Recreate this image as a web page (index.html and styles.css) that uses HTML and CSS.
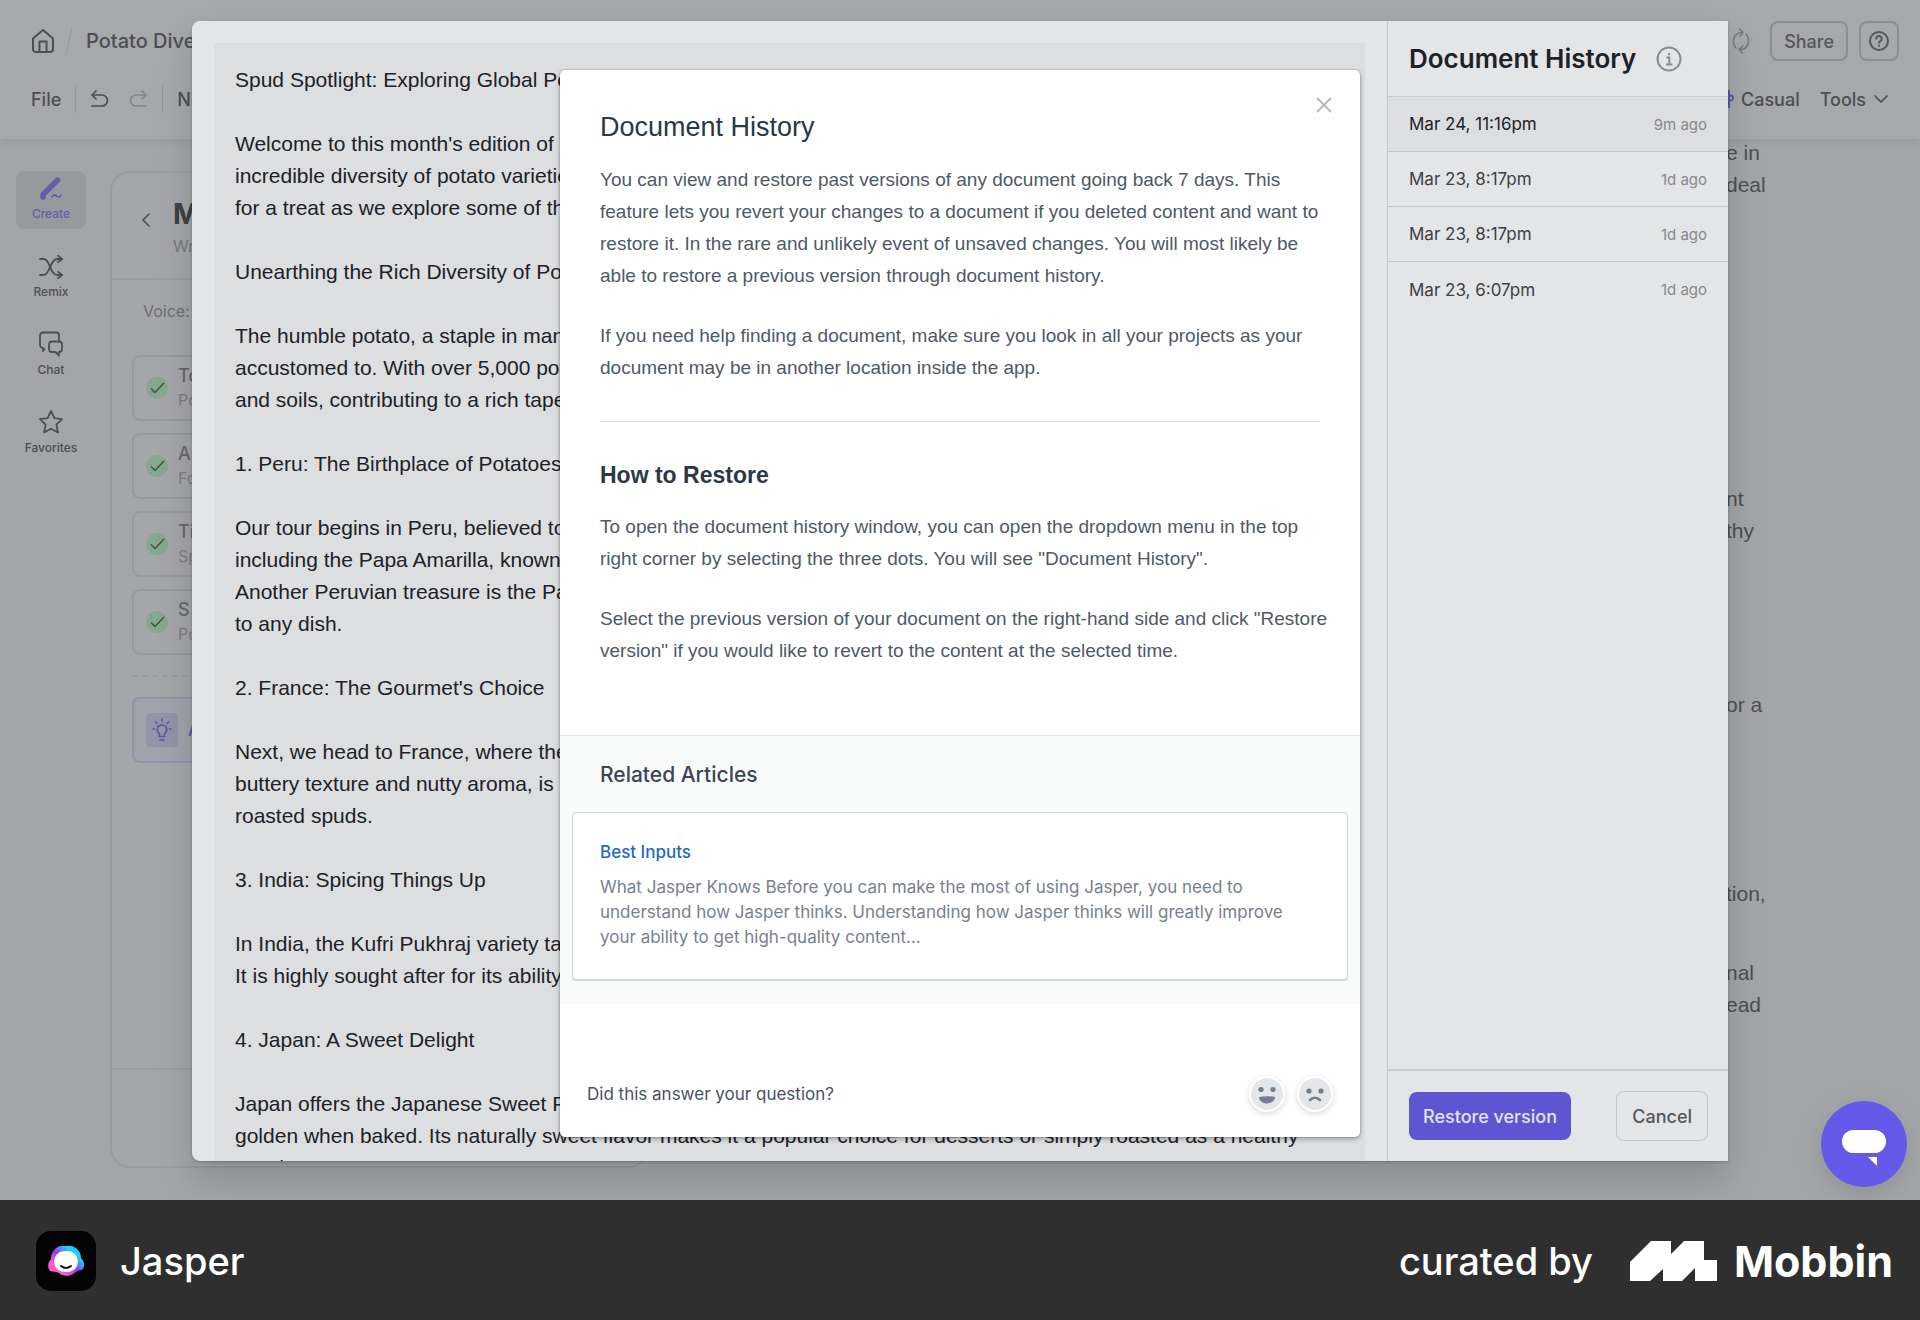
FILE: index.html
```
<!DOCTYPE html>
<html lang="en">
<head>
    <meta charset="UTF-8">
    <meta name="viewport" content="width=device-width, initial-scale=1.0">
    <title>Jasper - Document History</title>
    <link rel="stylesheet" href="styles.css">
</head>
<body>
    <div class="app">
        <header class="topbar">
            <div class="topbar-row">
                <a class="home-link" href="#" aria-label="Home">
                    <svg width="24" height="26" viewBox="0 0 24 26" fill="none" stroke="currentColor" stroke-width="2" stroke-linejoin="round"><path d="M2 10.5 12 2l10 8.500V21a3 3 0 0 1-3 3H5a3 3 0 0 1-3-3z"/><path d="M8.500 24V13.500h7V24"/></svg>
                </a>
                <svg class="slash" width="8" height="30" viewBox="0 0 8 30" stroke="currentColor" fill="none"><path d="M7 1 1 29"/></svg>
                <span class="doc-name">Potato Diversity</span>
                <div class="topbar-actions">
                    <svg class="sync" width="20" height="26" viewBox="0 0 20 26" fill="none" stroke="currentColor" stroke-width="1.500" stroke-linecap="round" stroke-linejoin="round"><path d="M11 4.500H9C3 6 0 14 5 20"/><path d="M8.500 1 12 4.300 9 8"/><path d="M9 21.500h2c6-1.500 9-9.500 4-15.500"/><path d="M11.500 18 8 21.700l3.500 3.300"/></svg>
                    <button class="outline-btn">Share</button>
                    <button class="outline-btn icon-btn" aria-label="Help">
                        <svg width="22" height="22" viewBox="0 0 22 22" fill="none" stroke="currentColor" stroke-width="2" stroke-linecap="round"><circle cx="11" cy="11" r="9"/><path d="M8.300 8.800a2.700 2.700 0 1 1 4 2.300c-.9.500-1.300.9-1.300 1.700"/><path d="M11 15.600v.1"/></svg>
                    </button>
                </div>
            </div>
            <div class="topbar-row">
                <span class="menu-item">File</span>
                <span class="divider"></span>
                <svg class="undo" width="20" height="20" viewBox="0 0 20 20" fill="none" stroke="currentColor" stroke-width="1.700" stroke-linecap="round" stroke-linejoin="round"><path d="M6 2 2 6l4 4"/><path d="M2.500 6H12a5.500 5.500 0 0 1 0 11H2"/></svg>
                <svg class="redo" width="20" height="20" viewBox="0 0 20 20" fill="none" stroke="currentColor" stroke-width="1.500" stroke-linecap="round" stroke-linejoin="round"><path d="m14 2 4 4-4 4"/><path d="M17.500 6H8a5.500 5.500 0 0 0 0 11h10"/></svg>
                <span class="divider"></span>
                <span class="menu-item">Normal</span>
                <div class="topbar-menus">
                    <svg class="voice-icon" width="16" height="20" viewBox="0 0 16 20" fill="none" stroke="currentColor" stroke-width="2"><path d="M2 7v6M6 4v12M11 1v18"/><circle cx="12.500" cy="9" r="2.500"/></svg>
                    <span class="menu-item">Casual</span>
                    <span class="menu-item tools">Tools</span>
                    <svg width="16" height="10" viewBox="0 0 16 10" fill="none" stroke="currentColor" stroke-width="1.700" stroke-linecap="round" stroke-linejoin="round"><path d="m2 2 6 6 6-6"/></svg>
                </div>
            </div>
        </header>

        <div class="workspace">
            <nav class="rail">
                <a class="rail-item active" href="#">
                    <svg width="24" height="24" viewBox="0 0 24 24" fill="none" stroke="currentColor" stroke-linecap="round" stroke-linejoin="round"><path d="M4 20v-2.500L18.500 3" stroke-width="5.500"/><path d="M13 20c2-2.500 3.500-2.500 4.500-1s2.500 1.500 4.500-.5" stroke-width="1.800"/></svg>
                    Create
                </a>
                <a class="rail-item" href="#">
                    <svg width="26" height="24" viewBox="0 0 26 24" fill="none" stroke="currentColor" stroke-width="1.800" stroke-linecap="round" stroke-linejoin="round"><path d="M2 4h4c6 0 6 16 13 16h5"/><path d="M2 20h4c6 0 6-16 13-16h5"/><path d="m20 0.800 4 3.200-4 3.200M20 16.800l4 3.200-4 3.200"/></svg>
                    Remix
                </a>
                <a class="rail-item" href="#">
                    <svg width="26" height="26" viewBox="0 0 26 26" fill="none" stroke="currentColor" stroke-width="1.800" stroke-linejoin="round"><path d="M7 17.500 5 20v-3a3 3 0 0 1-3-3V4.500a3 3 0 0 1 3-3h13a3 3 0 0 1 3 3V10"/><path d="M14 10.500h7a3 3 0 0 1 3 3V18a3 3 0 0 1-3 3v3.500L17.500 21H14a3 3 0 0 1-3-3v-4.500a3 3 0 0 1 3-3z"/></svg>
                    Chat
                </a>
                <a class="rail-item" href="#">
                    <svg width="26" height="26" viewBox="0 0 26 26" fill="none" stroke="currentColor" stroke-width="1.800" stroke-linejoin="round"><path d="m13 2 3.400 7.200 7.600 1-5.600 5.400 1.500 7.900L13 19.700l-6.900 3.800 1.500-7.900L2 10.200l7.600-1z"/></svg>
                    Favorites
                </a>
            </nav>

            <section class="panel">
                <div class="panel-head">
                    <svg width="10" height="16" viewBox="0 0 10 16" fill="none" stroke="currentColor" stroke-width="1.600" stroke-linecap="round" stroke-linejoin="round"><path d="M8 2 2 8l6 6"/></svg>
                    <div>
                        <h2>My</h2>
                        <p>Write</p>
                    </div>
                </div>
                <div class="panel-body">
                    <p class="voice">Voice:</p>
                    <div class="field-card">
                        <span class="check"><svg width="15" height="12" viewBox="0 0 15 12" fill="none" stroke="currentColor" stroke-width="1.500"><path d="m1 6.500 4 4L14 1"/></svg></span>
                        <div><strong>Topic</strong><span>Potato</span></div>
                    </div>
                    <div class="field-card">
                        <span class="check"><svg width="15" height="12" viewBox="0 0 15 12" fill="none" stroke="currentColor" stroke-width="1.500"><path d="m1 6.500 4 4L14 1"/></svg></span>
                        <div><strong>Aud</strong><span>Food</span></div>
                    </div>
                    <div class="field-card">
                        <span class="check"><svg width="15" height="12" viewBox="0 0 15 12" fill="none" stroke="currentColor" stroke-width="1.500"><path d="m1 6.500 4 4L14 1"/></svg></span>
                        <div><strong>Title</strong><span>Spud</span></div>
                    </div>
                    <div class="field-card">
                        <span class="check"><svg width="15" height="12" viewBox="0 0 15 12" fill="none" stroke="currentColor" stroke-width="1.500"><path d="m1 6.500 4 4L14 1"/></svg></span>
                        <div><strong>S</strong><span>Potato</span></div>
                    </div>
                    <div class="dashes"></div>
                    <div class="field-card add-card">
                        <span class="bulb"><svg width="20" height="24" viewBox="0 0 20 24" fill="none" stroke="currentColor" stroke-width="1.600" stroke-linecap="round"><path d="M7.500 18.500v-2.500C3.500 12.500 5 7 10 7s6.500 5.500 2.500 9v2.500z"/><path d="M8 22h4M10 1v2M3.500 4l1.300 1.300M16.500 4l-1.300 1.300M1 11h1.500M17.500 11H19"/></svg></span>
                        <strong>Add</strong>
                    </div>
                </div>
                <div class="panel-foot"></div>
            </section>

            <article class="editor">
                <p>e in<br>deal</p>
                <p>nt<br>thy</p>
                <p>or a</p>
                <p>tion,</p>
                <p>nal<br>ead</p>
            </article>
        </div>

        <div class="overlay">
            <div class="modal">
                <div class="preview">
                    <div class="preview-text">
                        <p>Spud Spotlight: Exploring Global Potato</p>
                        <p>Welcome to this month's edition of Spud<br>incredible diversity of potato varieties<br>for a treat as we explore some of the</p>
                        <p>Unearthing the Rich Diversity of Potatoes</p>
                        <p>The humble potato, a staple in many<br>accustomed to. With over 5,000 potato<br>and soils, contributing to a rich tapestry</p>
                        <p>1. Peru: The Birthplace of Potatoes</p>
                        <p>Our tour begins in Peru, believed to be<br>including the Papa Amarilla, known for<br>Another Peruvian treasure is the Papa<br>to any dish.</p>
                        <p>2. France: The Gourmet's Choice</p>
                        <p>Next, we head to France, where the<br>buttery texture and nutty aroma, is<br>roasted spuds.</p>
                        <p>3. India: Spicing Things Up</p>
                        <p>In India, the Kufri Pukhraj variety takes<br>It is highly sought after for its ability to</p>
                        <p>4. Japan: A Sweet Delight</p>
                        <p>Japan offers the Japanese Sweet Potato<br>golden when baked. Its naturally sweet flavor makes it a popular choice for desserts or simply roasted as a healthy<br>snack.</p>
                    </div>
                </div>

                <aside class="history">
                    <div class="history-head">
                        <h1>Document History</h1>
                        <svg width="26" height="26" viewBox="0 0 26 26" fill="none" stroke="currentColor" stroke-width="2"><circle cx="13" cy="13" r="11.500"/><path d="M10.500 11.500h2.800V18M10 18.500h6.500"/><path d="M13 7v2.200"/></svg>
                    </div>
                    <ul class="versions">
                        <li class="selected"><span>Mar 24, 11:16pm</span><time>9m ago</time></li>
                        <li><span>Mar 23, 8:17pm</span><time>1d ago</time></li>
                        <li><span>Mar 23, 8:17pm</span><time>1d ago</time></li>
                        <li><span>Mar 23, 6:07pm</span><time>1d ago</time></li>
                    </ul>
                    <div class="history-foot">
                        <button class="restore-btn">Restore version</button>
                        <button class="cancel-btn">Cancel</button>
                    </div>
                </aside>
            </div>
        </div>

        <div class="help">
            <button class="close-btn" aria-label="Close">
                <svg width="18" height="18" viewBox="0 0 18 18" stroke="currentColor" stroke-width="2" fill="none"><path d="m2 2 14 14M16 2 2 16"/></svg>
            </button>
            <div class="help-body">
                <h2 class="help-title">Document History</h2>
                <p>You can view and restore past versions of any document going back 7 days. This feature lets you revert your changes to a document if you deleted content and want to restore it. In the rare and unlikely event of unsaved changes. You will most likely be able to restore a previous version through document history.</p>
                <p>If you need help finding a document, make sure you look in all your projects as your document may be in another location inside the app.</p>
                <hr>
                <h3>How to Restore</h3>
                <p>To open the document history window, you can open the dropdown menu in the top right corner by selecting the three dots. You will see "Document History".</p>
                <p>Select the previous version of your document on the right-hand side and click "Restore version" if you would like to revert to the content at the selected time.</p>
            </div>
            <div class="related">
                <h3>Related Articles</h3>
                <div class="article-card">
                    <a href="#">Best Inputs</a>
                    <p>What Jasper Knows Before you can make the most of using Jasper, you need to understand how Jasper thinks. Understanding how Jasper thinks will greatly improve your ability to get high-quality content...</p>
                </div>
            </div>
            <div class="feedback">
                <span>Did this answer your question?</span>
                <button class="face" aria-label="Yes">
                    <svg width="32" height="32" viewBox="0 0 32 32" fill="currentColor"><circle cx="10" cy="11.500" r="2.600"/><circle cx="22" cy="11.500" r="2.600"/><path d="M8 19q8-1.500 16 0c0 4-4 6.500-8 6.500S8 23 8 19z"/></svg>
                </button>
                <button class="face" aria-label="No">
                    <svg width="32" height="32" viewBox="0 0 32 32" fill="currentColor"><circle cx="10" cy="13" r="2.600"/><circle cx="22" cy="13" r="2.600"/><path d="M11 22q5-4.500 10 0" fill="none" stroke="currentColor" stroke-width="2.600" stroke-linecap="round"/></svg>
                </button>
            </div>
        </div>

        <button class="chat-btn" aria-label="Chat">
            <svg width="44" height="36" viewBox="0 0 44 36" fill="#fff"><rect width="44" height="23" rx="11.500"/><path d="M26 27h9v9z"/></svg>
        </button>
    </div>

    <footer class="credit">
        <svg class="app-icon" width="60" height="60" viewBox="0 0 60 60">
            <defs>
                <linearGradient id="ring" x1="0" y1="1" x2="1" y2="0">
                    <stop offset="0" stop-color="#ff5ab4"/>
                    <stop offset=".28" stop-color="#f45cd8"/>
                    <stop offset=".5" stop-color="#9a35ee"/>
                    <stop offset=".75" stop-color="#18d8ff"/>
                    <stop offset="1" stop-color="#5a80ff"/>
                </linearGradient>
            </defs>
            <rect width="60" height="60" rx="15" fill="#040404"/>
            <path d="M24 15h12c6 2 9 7 9 12 4 4 4 9 1 12-4 0-6 2-9 4-5 3-11 2-14-1-3-2-6-1-9-2-3-4-2-9 1-12 0-6 3-11 9-13z" fill="url(#ring)"/>
            <rect x="18" y="20" width="24" height="21" rx="10.500" fill="#fff"/>
            <path d="M25 35q5 4 10 0" fill="none" stroke="#111" stroke-width="2" stroke-linecap="round"/>
        </svg>
        <span class="credit-name">Jasper</span>
        <span class="credit-by">curated by</span>
        <svg width="87" height="40" viewBox="0 0 87 40" fill="#fff"><path d="M0 21 21 0h20v13L54 0h20v19h13v21H65V27L52 40H33V28L20 40H0z"/></svg>
        <span class="mobbin">Mobbin</span>
    </footer>
</body>
</html>
```
FILE: styles.css
```
* {
    box-sizing: border-box;
}
body {
    margin: 0;
    min-height: 100vh;
    display: flex;
    flex-direction: column;
    font-family: Inter, "Liberation Sans", sans-serif;
    color: #4d4e52;
}
h1, h2, h3, p, ul {
    margin: 0;
    padding: 0;
}
a {
    color: inherit;
    text-decoration: none;
}
button {
    font-family: inherit;
    cursor: pointer;
}
svg {
    display: block;
    flex-shrink: 0;
}
.app {
    position: relative;
    flex: 1;
    height: calc(100vh - 120px);
    display: flex;
    flex-direction: column;
    overflow: hidden;
    background: #a4a5a8;
}

/* top bar */
.topbar {
    height: 139px;
    padding: 12px 21px 0 31px;
    background: #a7a8ab;
    box-shadow: 0 2px 8px rgba(0,0,0,0.09);
}
.topbar-row {
    display: flex;
    align-items: center;
    height: 58px;
    font-size: 18px;
    font-weight: 500;
}
.slash {
    margin: 0 13px 0 10px;
    color: #999a9d;
}
.doc-name {
    font-size: 20px;
}
.topbar-actions {
    margin-left: auto;
    display: flex;
    align-items: center;
    gap: 11px;
}
.sync {
    margin-right: 8px;
    color: #77787b;
}
.outline-btn {
    height: 40px;
    padding: 0 12px;
    border: 2px solid #8d8e91;
    border-radius: 8px;
    background: none;
    color: #55565a;
    font-size: 18px;
    font-weight: 500;
}
.icon-btn {
    padding: 0 7px;
}
.divider {
    width: 1px;
    height: 28px;
    margin: 0 14px;
    background: #97989b;
}
.redo {
    margin-left: 18px;
    color: #838487;
}
.topbar-menus {
    margin-left: auto;
    padding-right: 10px;
    display: flex;
    align-items: center;
    gap: 7px;
}
.voice-icon {
    color: #5f59b0;
}
.tools {
    margin-left: 13px;
}

/* workspace */
.workspace {
    flex: 1;
    display: flex;
    min-height: 0;
}
.rail {
    width: 110px;
    padding: 32px 24px 0 16px;
    display: flex;
    flex-direction: column;
    gap: 20px;
}
.rail-item {
    height: 58px;
    padding-bottom: 7px;
    display: flex;
    flex-direction: column;
    align-items: center;
    justify-content: flex-end;
    gap: 5px;
    border-radius: 8px;
    font-size: 12px;
    line-height: 16px;
    font-weight: 500;
}
.rail-item.active {
    background: #98999c;
    color: #655daa;
}
.panel {
    width: 28%;
    margin: 32px 0 32px;
    display: flex;
    flex-direction: column;
    border: 2px solid #9b9c9f;
    border-radius: 20px;
    background: #a5a6a9;
}
.panel-head {
    display: flex;
    align-items: flex-start;
    gap: 22px;
    height: 107px;
    padding: 24px 0 0 29px;
    border-bottom: 2px solid #9b9c9f;
}
.panel-head svg {
    margin-top: 15px;
}
.panel-head h2 {
    font-size: 28px;
    line-height: 34px;
    color: #3f4044;
    white-space: nowrap;
}
.panel-head p {
    font-size: 16px;
    line-height: 30px;
    color: #77787b;
}
.panel-body {
    flex: 1;
    padding: 20px;
    display: flex;
    flex-direction: column;
    gap: 12px;
}
.voice {
    padding: 0 11px 21px;
    font-size: 16px;
    line-height: 22px;
    color: #6d6e72;
}
.field-card {
    display: flex;
    align-items: center;
    gap: 10px;
    height: 66px;
    padding-left: 12px;
    border: 2px solid #999a9d;
    border-radius: 8px;
}
.field-card strong,
.field-card span {
    display: block;
    font-size: 18px;
    line-height: 24px;
    font-weight: 500;
    color: #67686c;
}
.field-card div span {
    font-size: 16px;
    font-weight: 400;
    color: #7d7e82;
}
.field-card .check {
    display: grid;
    place-items: center;
    width: 22px;
    height: 22px;
    border-radius: 50%;
    background: #87a890;
    color: #3f5045;
}
.dashes {
    margin: 8px 0;
    border-top: 2px dashed #9b9ca0;
}
.add-card {
    border-color: #9592ab;
    background: #a2a2ac;
}
.add-card .bulb {
    display: grid;
    place-items: center;
    width: 32px;
    height: 34px;
    border-radius: 4px;
    background: #9393aa;
    color: #5c56a4;
}
.add-card strong {
    color: #5c56a4;
}
.panel-foot {
    height: 98px;
    border-top: 2px solid #9b9c9f;
}
.editor {
    position: absolute;
    left: calc(90% - 2px);
    top: 137px;
    font-family: "Liberation Sans", Arial, sans-serif;
    font-size: 21px;
    line-height: 32px;
}
.editor p {
    margin-bottom: 142px;
}
.editor p:first-child {
    margin-bottom: 282px;
}
.editor p:nth-child(3) {
    margin-bottom: 157px;
}
.editor p:nth-child(4) {
    margin-bottom: 47px;
}

/* document history modal */
.overlay {
    position: absolute;
    inset: 0;
    padding: 21px 10% 39px;
}
.modal {
    height: 100%;
    display: flex;
    overflow: hidden;
    border-radius: 8px 0 0 8px;
    background: #e4e5e7;
    box-shadow: 0 18px 36px rgba(0,0,0,0.16), 0 1px 3px rgba(0,0,0,0.2);
}
.preview {
    flex: 1;
    padding: 22px 22px 0;
}
.preview-text {
    height: 100%;
    padding: 21px;
    overflow: hidden;
    background: #dddee0;
    color: #202125;
    font-family: "Liberation Sans", Arial, sans-serif;
    font-size: 21px;
    line-height: 32px;
    white-space: nowrap;
}
.preview-text p {
    margin-bottom: 32px;
}
.history {
    width: 341px;
    display: flex;
    flex-direction: column;
    border-left: 1px solid #c8c9cb;
}
.history-head {
    display: flex;
    align-items: center;
    gap: 20px;
    height: 76px;
    padding-left: 21px;
    border-bottom: 1px solid #c8c9cb;
    color: #8b8c90;
}
.history-head h1 {
    font-size: 26px;
    line-height: 32px;
    font-weight: 600;
    color: #202125;
}
.versions {
    flex: 1;
    list-style: none;
}
.versions li {
    display: flex;
    align-items: center;
    justify-content: space-between;
    height: 55px;
    padding: 0 21px;
    font-size: 17px;
    color: #3e3f43;
}
.versions li:not(:last-child) {
    border-bottom: 1px solid #c4c5c8;
}
.versions .selected {
    background: #dddee0;
    color: #202125;
}
.versions time {
    font-size: 15px;
    color: #87888c;
}
.history-foot {
    display: flex;
    align-items: center;
    justify-content: space-between;
    height: 92px;
    padding: 0 20px 0 21px;
    border-top: 2px solid #cbccce;
}
.restore-btn,
.cancel-btn {
    height: 48px;
    padding: 0 14px;
    border: none;
    border-radius: 8px;
    background: #5d55d2;
    color: #e4e4f4;
    font-size: 18px;
    font-weight: 500;
}
.cancel-btn {
    height: 50px;
    padding: 0 15px;
    border: 1px solid #c4c5c8;
    background: none;
    color: #55565a;
}

/* help article */
.help {
    position: absolute;
    top: 70px;
    left: 50%;
    width: 800px;
    margin-left: -400px;
    border-radius: 5px;
    background: #fff;
    box-shadow: 0 0 2px rgba(0,0,0,0.3), 0 2px 5px rgba(0,0,0,0.3);
}
.close-btn {
    position: absolute;
    top: 26px;
    right: 27px;
    padding: 0;
    border: none;
    background: none;
    color: #b9babc;
}
.help-body {
    padding: 40px;
    border-bottom: 1px solid #e3e5e7;
    font-family: "Liberation Sans", Arial, sans-serif;
    font-size: 19px;
    line-height: 32px;
    color: #4f5965;
}
.help-title {
    margin-bottom: 20px;
    font-size: 27px;
    line-height: 34px;
    font-weight: 400;
    color: #2b3846;
}
.help-body p {
    margin: 0 -12px 28px 0;
}
.help-body hr {
    margin: 37px 0;
    border: none;
    border-top: 1px solid #dfe2e4;
}
.help-body h3 {
    margin-bottom: 20px;
    font-size: 23px;
    line-height: 32px;
    color: #2b3846;
}
.related {
    padding: 26px 12px 24px;
    background: #f9fafa;
}
.related h3 {
    margin-bottom: 24px;
    padding-left: 28px;
    font-size: 21px;
    line-height: 26px;
    font-weight: 500;
    color: #3a4655;
}
.article-card {
    padding: 27px 27px 29px;
    border: 1px solid #d3d7db;
    border-radius: 4px;
    background: #fff;
    box-shadow: 0 1px 1px rgba(0,0,0,0.15);
    font-size: 17px;
    line-height: 25px;
    color: #77818d;
}
.article-card a {
    display: block;
    margin-bottom: 10px;
    font-weight: 500;
    color: #1f69c1;
}
.feedback {
    display: flex;
    align-items: center;
    gap: 12px;
    padding: 72px 27px 25px;
    font-size: 17px;
    color: #48525f;
}
.feedback span {
    margin-right: auto;
}
.face {
    width: 36px;
    height: 36px;
    padding: 0;
    border: 2px solid #fff;
    border-radius: 50%;
    background: #e4e7ea;
    color: #727d8f;
    box-shadow: 0 2px 6px rgba(0,0,0,0.15);
}
.chat-btn {
    position: absolute;
    right: 13px;
    bottom: 13px;
    display: grid;
    place-items: center;
    width: 86px;
    height: 86px;
    padding: 8px 0 0;
    border: none;
    border-radius: 50%;
    background: #6459e8;
    box-shadow: 0 8px 24px rgba(80,110,120,0.3);
}

/* bottom strip */
.credit {
    display: flex;
    align-items: center;
    height: 120px;
    padding: 2px 27px 0 36px;
    background: #2f2f2f;
    color: #fff;
    font-size: 38px;
    font-weight: 500;
}
.credit-name {
    margin: 0 auto 0 24px;
}
.credit-by {
    margin-right: 37px;
}
.mobbin {
    margin-left: 17px;
    font-size: 43px;
    font-weight: 700;
}
```
